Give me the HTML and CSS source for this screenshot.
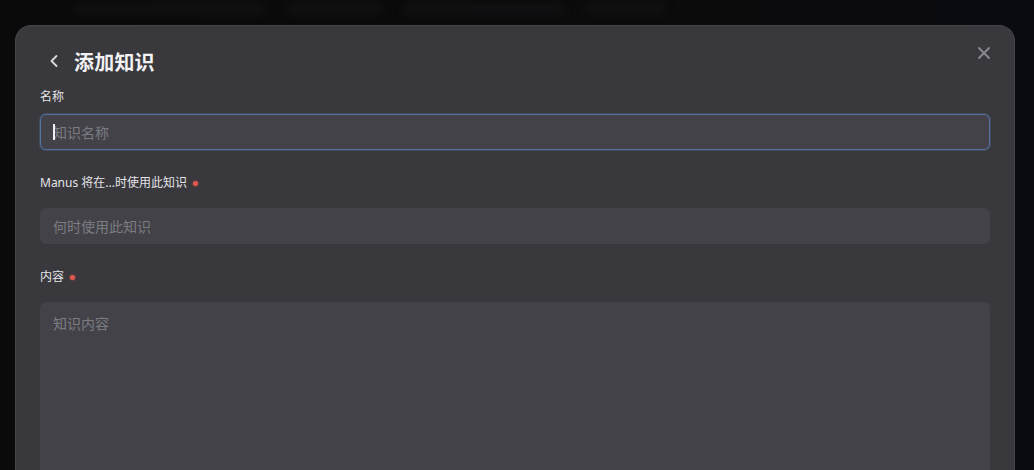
FILE: index.html
```html
<!DOCTYPE html>
<html lang="zh-CN">
<head>
  <meta charset="UTF-8" />
  <meta name="viewport" content="width=device-width, initial-scale=1.0"/>
  <title>添加知识</title>
  <link rel="stylesheet" href="styles.css">
</head>
<body>

  <div class="backdrop">
    <span class="ghost w1"></span>
    <span class="ghost w2"></span>
    <span class="ghost w3"></span>
    <span class="ghost w4"></span>
  </div>

  <div class="modal">
    <button class="close-btn" aria-label="关闭">
      <svg width="14" height="14" viewBox="0 0 14 14" fill="none">
        <path d="M2 2L12 12M12 2L2 12" stroke="currentColor" stroke-width="1.8" stroke-linecap="round"/>
      </svg>
    </button>

    <div class="head">
      <button class="back-btn" aria-label="返回">
        <svg width="10" height="14" viewBox="0 0 10 14" fill="none">
          <path d="M7.5 2L2.5 7L7.5 12" stroke="currentColor" stroke-width="1.8" stroke-linecap="round" stroke-linejoin="round"/>
        </svg>
      </button>
      <h1>添加知识</h1>
    </div>

    <div class="field first">
      <label for="name">名称</label>
      <div class="input-wrap">
        <span class="caret"></span>
        <input id="name" class="input focused" type="text" placeholder="知识名称">
      </div>
    </div>

    <div class="field">
      <label for="when" class="required">Manus 将在...时使用此知识</label>
      <input id="when" class="input" type="text" placeholder="何时使用此知识">
    </div>

    <div class="field">
      <label for="content" class="required">内容</label>
      <textarea id="content" class="input area" placeholder="知识内容"></textarea>
    </div>
  </div>

</body>
</html>
```

FILE: styles.css
```css
body {
  margin: 0;
  height: 470px;
  overflow: hidden;
  background: linear-gradient(90deg, #0a0a0b 0%, #0b0b0c 70%, #0a0b11 100%);
  font-family: 'Noto Sans', 'Noto Sans CJK SC', sans-serif;
  color: #e6e6e8;
}

.backdrop {
  height: 25px;
  display: flex;
  align-items: center;
  gap: 22px;
  padding: 0 0 8px 75px;
  box-sizing: border-box;
}

.ghost {
  height: 8px;
  border-radius: 4px;
  background: #131315;
  filter: blur(4px);
}

.w1 { width: 190px; }
.w2 { width: 95px; }
.w3 { width: 160px; }
.w4 { width: 80px; }

.modal {
  position: relative;
  margin-left: 15px;
  width: 1000px;
  height: 480px;
  box-sizing: border-box;
  padding: 21px 24px 0;
  background: #38383d;
  border: 1px solid #45454a;
  border-bottom: none;
  border-radius: 16px 16px 0 0;
}

.close-btn {
  position: absolute;
  top: 19px;
  right: 22px;
  width: 16px;
  height: 16px;
  padding: 0;
  border: none;
  background: none;
  color: #8b8b91;
  display: flex;
  align-items: center;
  justify-content: center;
}

.head {
  height: 28px;
  display: flex;
  align-items: center;
}

.back-btn {
  width: 16px;
  height: 16px;
  padding: 0;
  margin-left: 6px;
  margin-right: 12px;
  border: none;
  background: none;
  color: #dcdcdf;
  display: flex;
  align-items: center;
  justify-content: center;
}

h1 {
  margin: 0;
  font-size: 20px;
  font-weight: 700;
  color: #f2f2f4;
  letter-spacing: 0.2px;
}

.field {
  display: flex;
  flex-direction: column;
  margin-top: 24px;
}

.field.first {
  margin-top: 13px;
}

label {
  font-size: 12px;
  line-height: 18px;
  color: #e4e4e6;
  margin-bottom: 16px;
}

.field.first label {
  margin-bottom: 8px;
}

.required::after {
  content: '';
  display: inline-block;
  width: 5px;
  height: 5px;
  margin-left: 6px;
  vertical-align: 1px;
  border-radius: 50%;
  background: #e0574f;
  box-shadow: 0 0 3px rgba(224, 87, 79, 0.7);
}

.input-wrap {
  position: relative;
}

.input {
  width: 100%;
  height: 36px;
  box-sizing: border-box;
  padding: 0 12px;
  border: 1px solid transparent;
  border-radius: 6px;
  background: #424248;
  color: #e6e6e8;
  font-family: inherit;
  font-size: 14px;
  outline: none;
  caret-color: transparent;
}

.input::placeholder {
  color: #7c7c82;
}

.input.focused {
  border: 1.5px solid #54739f;
  box-shadow: 0 0 0 1px rgba(84, 115, 159, 0.35);
}

.caret {
  position: absolute;
  left: 13px;
  top: 10px;
  width: 1.5px;
  height: 16px;
  background: #f0f0f0;
}

.area {
  height: 200px;
  padding: 11px 12px;
  resize: none;
  line-height: 20px;
}
```
